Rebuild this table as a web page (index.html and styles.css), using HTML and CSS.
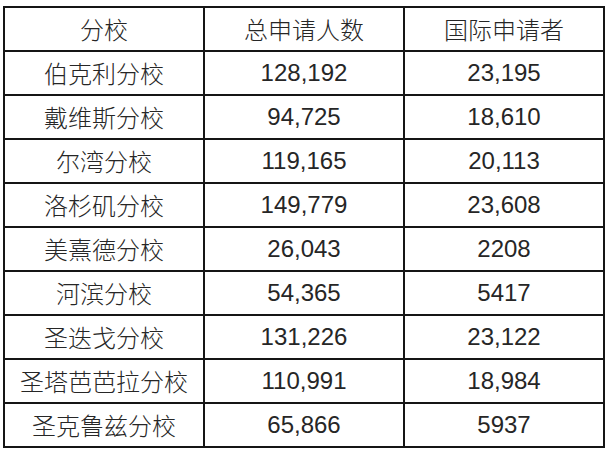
FILE: index.html
```html
<!DOCTYPE html>
<html lang="zh">
<head>
<meta charset="utf-8">
<link rel="stylesheet" href="styles.css">
</head>
<body>
<div class="sheet">
  <div class="grid">
    <div class="cell">分校</div><div class="cell">总申请人数</div><div class="cell">国际申请者</div>
    <div class="cell">伯克利分校</div><div class="cell">128,192</div><div class="cell">23,195</div>
    <div class="cell">戴维斯分校</div><div class="cell">94,725</div><div class="cell">18,610</div>
    <div class="cell">尔湾分校</div><div class="cell">119,165</div><div class="cell">20,113</div>
    <div class="cell">洛杉矶分校</div><div class="cell">149,779</div><div class="cell">23,608</div>
    <div class="cell">美熹德分校</div><div class="cell">26,043</div><div class="cell">2208</div>
    <div class="cell">河滨分校</div><div class="cell">54,365</div><div class="cell">5417</div>
    <div class="cell">圣迭戈分校</div><div class="cell">131,226</div><div class="cell">23,122</div>
    <div class="cell">圣塔芭芭拉分校</div><div class="cell">110,991</div><div class="cell">18,984</div>
    <div class="cell">圣克鲁兹分校</div><div class="cell">65,866</div><div class="cell">5937</div>
  </div>
</div>
</body>
</html>
```
FILE: styles.css
```css
html, body {
  margin: 0;
  padding: 0;
  background: #ffffff;
}
.sheet {
  padding: 6px 0 0 3px;
}
.grid {
  display: grid;
  grid-template-columns: 198px 198px 198px;
  grid-auto-rows: 42px;
  gap: 2px;
  padding: 2px;
  background: #151515;
  width: max-content;
}
.cell {
  background: #ffffff;
  display: flex;
  align-items: center;
  justify-content: center;
  padding-bottom: 1px;
  font-family: "Liberation Sans", "Noto Sans CJK SC", sans-serif;
  font-size: 24px;
  font-weight: 300;
  color: #262626;
}
```
